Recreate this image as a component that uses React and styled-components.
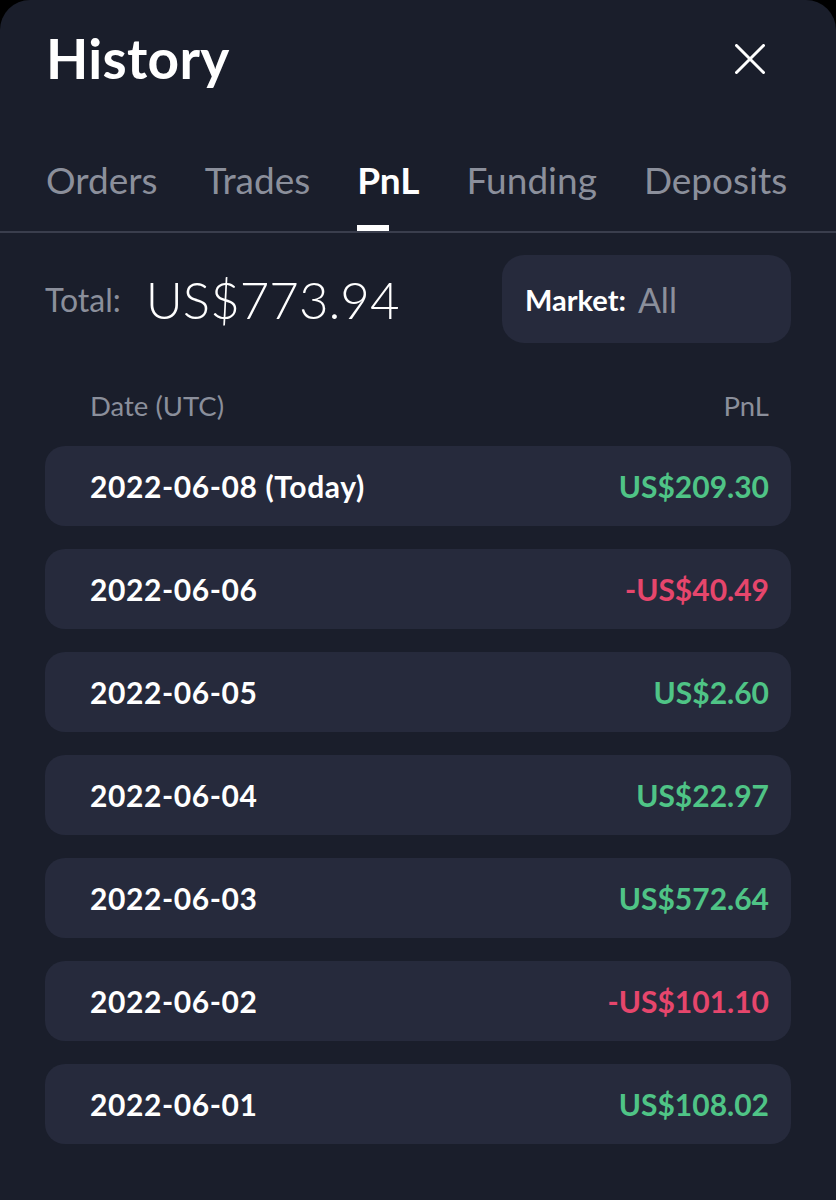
import React from 'react';
import styled, { createGlobalStyle } from 'styled-components';

const GlobalStyle = createGlobalStyle`
  html, body {
    margin: 0;
    padding: 0;
    background: #000;
  }
  body {
    font-family: Lato, "Noto Sans", sans-serif;
  }
`;

const Sheet = styled.div`
  width: 836px;
  min-height: 1200px;
  background: #1a1e2b;
  border-radius: 30px 30px 0 0;
  box-sizing: border-box;
  color: #fff;
`;

const Header = styled.div`
  display: flex;
  justify-content: space-between;
  align-items: center;
  padding: 31px 71px 0 46px;
`;

const Title = styled.h1`
  margin: 0;
  font-size: 55px;
  line-height: 55px;
  font-weight: 700;
  letter-spacing: 0.3px;
`;

const CloseButton = styled.button`
  background: none;
  border: none;
  padding: 0;
  width: 30px;
  height: 30px;
  display: flex;
  align-items: center;
  justify-content: center;
  cursor: pointer;
`;

const Tabs = styled.div`
  display: flex;
  gap: 47px;
  padding: 0 46px;
  margin-top: 74px;
  border-bottom: 2px solid #3a3e4d;
`;

const Tab = styled.div`
  position: relative;
  font-size: 37px;
  font-weight: ${p => (p.$active ? 700 : 400)};
  color: ${p => (p.$active ? '#fff' : '#8b8f9b')};
  padding-bottom: 31px;
  line-height: 40px;

  &::after {
    content: '';
    display: ${p => (p.$active ? 'block' : 'none')};
    position: absolute;
    left: 0;
    bottom: 0;
    width: 32px;
    height: 6px;
    background: #fff;
  }
`;

const Content = styled.div`
  padding: 0 45px;
`;

const Summary = styled.div`
  display: flex;
  align-items: center;
  justify-content: space-between;
  margin-top: 22px;
`;

const Total = styled.div`
  display: flex;
  align-items: center;
  gap: 25px;
`;

const TotalLabel = styled.span`
  font-size: 32px;
  color: #8b8f9b;
`;

const TotalValue = styled.span`
  font-size: 51px;
  font-weight: 300;
  color: #fff;
`;

const MarketBox = styled.div`
  width: 289px;
  height: 88px;
  box-sizing: border-box;
  background: #262a3c;
  border-radius: 22px;
  display: flex;
  align-items: center;
  padding-left: 23px;
  gap: 12px;
`;

const MarketLabel = styled.span`
  font-size: 29px;
  font-weight: 700;
  color: #fff;
`;

const MarketValue = styled.span`
  font-size: 34px;
  color: #8b8f9b;
`;

const ColumnHead = styled.div`
  display: flex;
  justify-content: space-between;
  padding: 0 22px 0 45px;
  margin-top: 46px;
  font-size: 27.5px;
  color: #8b8f9b;
`;

const List = styled.div`
  display: flex;
  flex-direction: column;
  gap: 23px;
  margin-top: 24px;
`;

const Row = styled.div`
  height: 80px;
  background: #262a3c;
  border-radius: 20px;
  display: flex;
  align-items: center;
  justify-content: space-between;
  padding: 0 22px 0 45px;
  font-size: 30px;
  font-weight: 700;
`;

const DateText = styled.span`
  color: #fff;
  letter-spacing: 0.6px;
`;

const Amount = styled.span`
  color: ${p => (p.$negative ? '#e6466c' : '#4fc486')};
`;

const rows = [
  { date: '2022-06-08 (Today)', pnl: 'US$209.30' },
  { date: '2022-06-06', pnl: '-US$40.49', negative: true },
  { date: '2022-06-05', pnl: 'US$2.60' },
  { date: '2022-06-04', pnl: 'US$22.97' },
  { date: '2022-06-03', pnl: 'US$572.64' },
  { date: '2022-06-02', pnl: '-US$101.10', negative: true },
  { date: '2022-06-01', pnl: 'US$108.02' },
];

const tabs = ['Orders', 'Trades', 'PnL', 'Funding', 'Deposits'];

const App = () => {
  return (
    <>
      <GlobalStyle />
      <Sheet>
        <Header>
          <Title>History</Title>
          <CloseButton aria-label="Close">
            <svg width="30" height="30" viewBox="0 0 30 30">
              <path d="M1.5 1.5 L28.5 28.5 M28.5 1.5 L1.5 28.5" stroke="#fff" strokeWidth="3" strokeLinecap="round" />
            </svg>
          </CloseButton>
        </Header>
        <Tabs>
          {tabs.map(t => (
            <Tab key={t} $active={t === 'PnL'}>{t}</Tab>
          ))}
        </Tabs>
        <Content>
          <Summary>
            <Total>
              <TotalLabel>Total:</TotalLabel>
              <TotalValue>US$773.94</TotalValue>
            </Total>
            <MarketBox>
              <MarketLabel>Market:</MarketLabel>
              <MarketValue>All</MarketValue>
            </MarketBox>
          </Summary>
          <ColumnHead>
            <span>Date (UTC)</span>
            <span>PnL</span>
          </ColumnHead>
          <List>
            {rows.map(r => (
              <Row key={r.date}>
                <DateText>{r.date}</DateText>
                <Amount $negative={r.negative}>{r.pnl}</Amount>
              </Row>
            ))}
          </List>
        </Content>
      </Sheet>
    </>
  );
};

export default App;
